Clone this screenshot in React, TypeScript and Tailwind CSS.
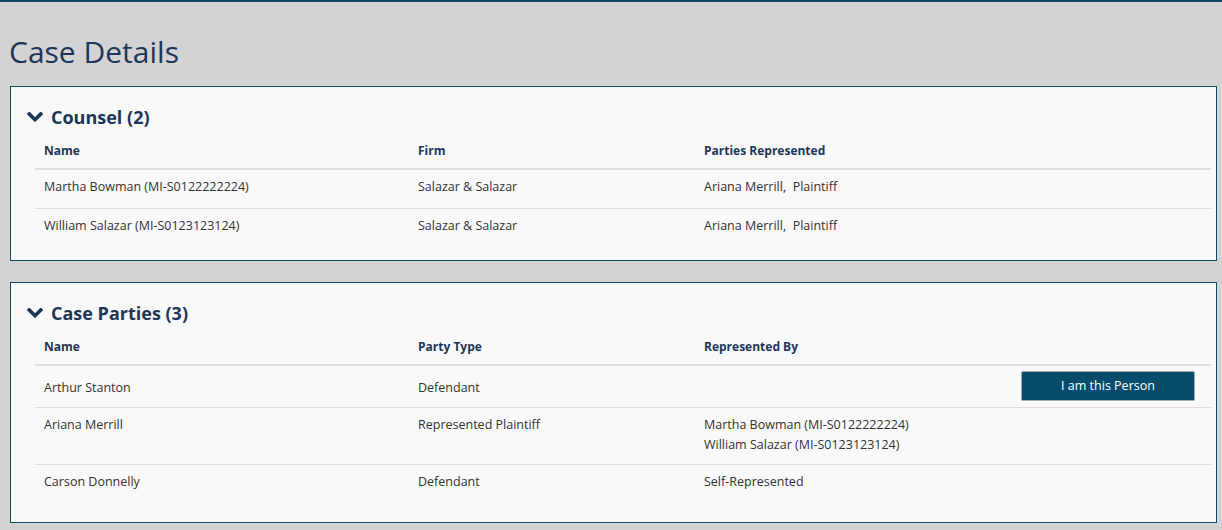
import type { ReactNode } from "react";

const font = { fontFamily: '"Open Sans", "Noto Sans", sans-serif' };

function Chevron() {
  return (
    <svg viewBox="90 570 1612 1000" className="h-[10px] w-[16px] fill-[#1d3658]">
      <path d="M1683 808l-742 741q-19 19-45 19t-45-19l-742-741q-19-19-19-45.5t19-45.5l166-165q19-19 45-19t45 19l531 531 531-531q19-19 45-19t45 19l166 165q19 19 19 45.5t-19 45.5z" />
    </svg>
  );
}

type Row = { cells: ReactNode[]; action?: boolean; tight?: boolean };

function Panel({
  title,
  headers,
  rows,
  bottom,
}: {
  title: string;
  headers: string[];
  rows: Row[];
  bottom: string;
}) {
  return (
    <section className={`mr-[5px] ml-[10px] border border-[#0b4d6b] bg-[#f9f9f9] pt-[18px] pr-[5px] pl-[24px] ${bottom}`}>
      {/* Collapsible header */}
      <div className="-ml-[8px] flex h-[24px] items-center gap-[8px]">
        <Chevron />
        <h2 className="text-[18px] leading-[24px] font-bold text-[#1d3658]">{title}</h2>
      </div>

      {/* Table */}
      <div className="grid h-[41px] grid-cols-[374px_286px_1fr] border-b-2 border-[#dcdcdc] pt-[12px] text-[12px] leading-[20px] font-bold text-[#1d3658]">
        {headers.map((h) => (
          <div key={h} className="pl-[9px]">
            {h}
          </div>
        ))}
      </div>
      {rows.map((r, i) => (
        <div
          key={i}
          className={`grid grid-cols-[374px_286px_1fr_190px] items-start text-[12.5px] leading-[20px] text-[#333] ${
            i < rows.length - 1 ? "border-b border-[#dcdcdc]" : ""
          } ${r.action ? "pt-[5px] pb-[6px]" : r.tight ? "pt-[7px] pb-[9px]" : "pt-[7px] pb-[11px]"}`}
        >
          {r.cells.map((c, j) => (
            <div key={j} className={r.action ? "pt-[7px] pl-[9px]" : "pl-[9px]"}>
              {c}
            </div>
          ))}
          <div className="flex justify-end pr-[16px]">
            {r.action && (
              <button className="h-[30px] w-[174px] rounded-[2px] border border-[#9aa8b0] bg-[#074d6b] text-[12.5px] text-white">
                I am this Person
              </button>
            )}
          </div>
        </div>
      ))}
    </section>
  );
}

export default function App() {
  return (
    <div style={font} className="min-h-screen border-t-2 border-[#0e4a66] bg-[#d3d3d3] pb-[8px]">
      <h1 className="pt-[30px] pb-[14px] pl-[9px] text-[30px] leading-[40px] text-[#1d3658]">Case Details</h1>

      <Panel
        title="Counsel (2)"
        headers={["Name", "Firm", "Parties Represented"]}
        bottom="pb-[13px]"
        rows={[
          { cells: ["Martha Bowman (MI-S0122222224)", "Salazar & Salazar", "Ariana Merrill,\u00a0 Plaintiff"] },
          { cells: ["William Salazar (MI-S0123123124)", "Salazar & Salazar", "Ariana Merrill,\u00a0 Plaintiff"] },
        ]}
      />

      <div className="h-[21px]" />

      <Panel
        title="Case Parties (3)"
        headers={["Name", "Party Type", "Represented By"]}
        bottom="pb-[19px]"
        rows={[
          { cells: ["Arthur Stanton", "Defendant", ""], action: true },
          {
            cells: [
              "Ariana Merrill",
              "Represented Plaintiff",
              <>
                <div>Martha Bowman (MI-S0122222224)</div>
                <div>William Salazar (MI-S0123123124)</div>
              </>,
            ],
            tight: true,
          },
          { cells: ["Carson Donnelly", "Defendant", "Self-Represented"] },
        ]}
      />
    </div>
  );
}
